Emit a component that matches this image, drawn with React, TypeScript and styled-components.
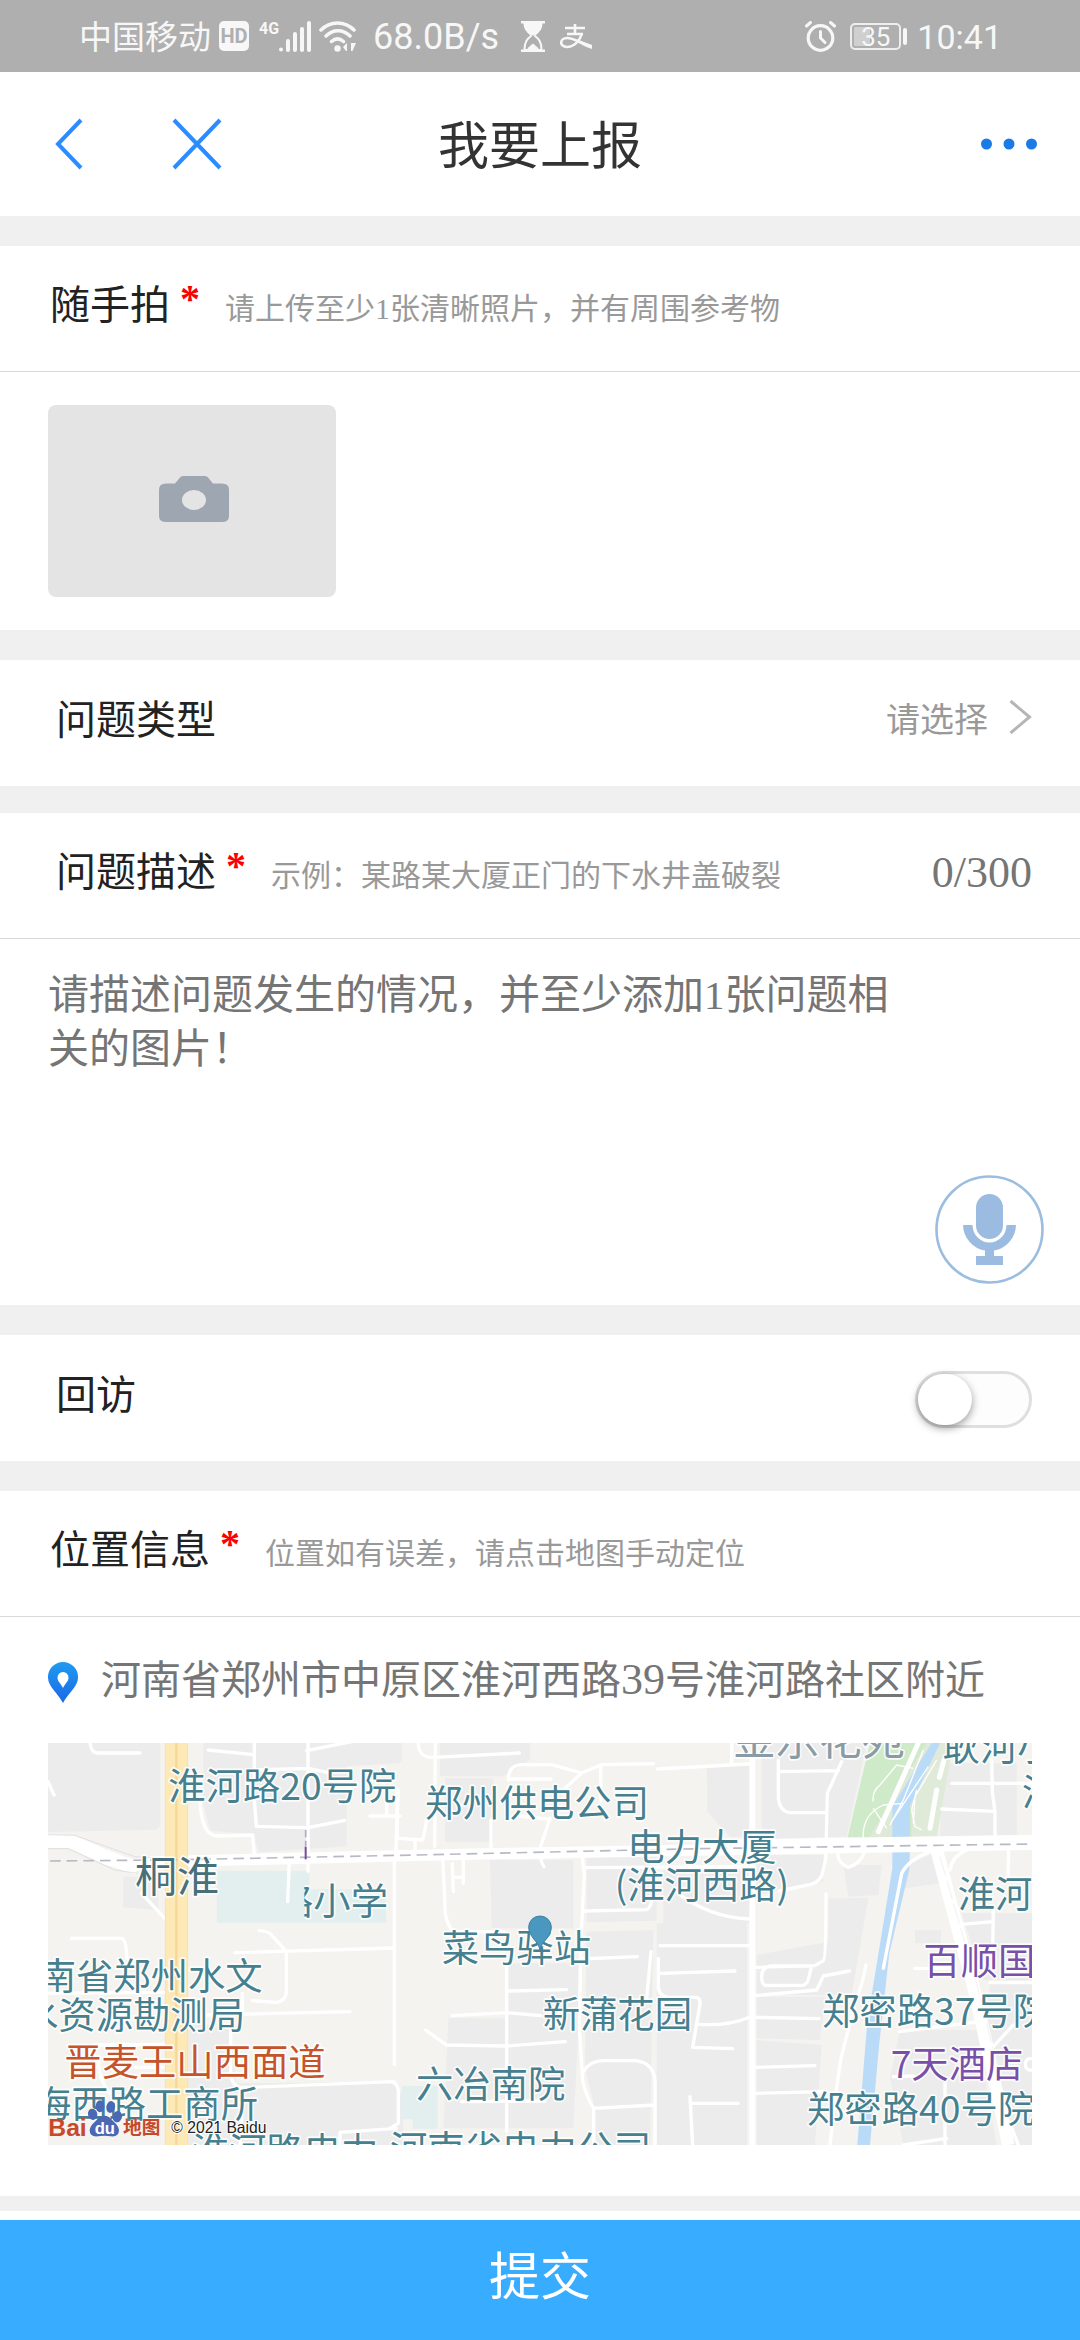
import React, { useState } from "react";
import styled, { createGlobalStyle } from "styled-components";

const cjk = `"Noto Sans CJK SC", sans-serif`;

const GlobalStyle = createGlobalStyle`
  *, *::before, *::after { box-sizing: border-box; }
  body {
    margin: 0;
    background: #f0f0f0;
    color: #222;
    font-family: "Liberation Serif", ${cjk};
  }
  button, textarea { font: inherit; color: inherit; border: 0; background: none; padding: 0; }
`;

const Page = styled.div`
  display: flex;
  flex-direction: column;
  min-height: 100vh;
`;

/* ---------- status bar ---------- */

const StatusBar = styled.header`
  display: flex;
  align-items: center;
  justify-content: space-between;
  height: 72px;
  padding: 0 78px 0 79px;
  background: #afafaf;
  color: #f7f7f7;
  font-family: Roboto, ${cjk};
  font-size: 36px;
  line-height: 40px;
`;

const StatusGroup = styled.div`
  display: flex;
  align-items: center;
  gap: 8px;
`;

const Carrier = styled.span`
  padding-top: 4px;
  font-size: 33px;
`;

const HdBadge = styled.span`
  width: 30px;
  height: 30px;
  border-radius: 5px;
  background: #f7f7f7;
  color: #afafaf;
  font: 700 20px/31px Roboto, sans-serif;
  text-align: center;
`;

const Network = styled.span`
  display: flex;
  align-items: flex-start;
  padding-left: 2px;
`;

const NetworkType = styled.span`
  font: 700 16px/16px Roboto, sans-serif;
`;

const Speed = styled.span`
  margin: 0 14px 0 8px;
  padding-top: 2px;
`;

const Notices = styled.span`
  display: flex;
  align-items: center;
  gap: 15px;
`;

const Battery = styled.span`
  display: flex;
  align-items: center;
  gap: 2px;
  margin: 0 2px 0 6px;

  &::after {
    content: "";
    width: 4px;
    height: 17px;
    border-radius: 2px;
    background: #f7f7f7;
  }
`;

const BatteryLevel = styled.span`
  width: 51px;
  height: 27px;
  border: 2px solid #eee;
  border-radius: 5px;
  background: linear-gradient(90deg, #cfcfcf 38%, transparent 38%) content-box;
  padding: 2px;
  font-size: 26px;
  line-height: 20px;
  text-align: center;
`;

const Clock = styled.time`
  padding-top: 2px;
  font-size: 34px;
`;

/* ---------- navigation ---------- */

const NavBar = styled.nav`
  display: grid;
  grid-template-columns: 1fr auto 1fr;
  align-items: center;
  height: 144px;
  padding: 0 42px;
  background: #fff;
`;

const NavActions = styled.div`
  display: flex;
  align-items: center;
  gap: 88px;
  padding-left: 12px;
`;

const IconButton = styled.button`
  display: flex;
  cursor: pointer;
`;

const MoreButton = styled(IconButton)`
  justify-self: end;
`;

const Title = styled.h1`
  margin: 0;
  padding-top: 6px;
  color: #333;
  font-size: 51px;
  font-weight: 400;
  line-height: 76px;
`;

/* ---------- form ---------- */

const Form = styled.form`
  display: flex;
  flex-direction: column;
  flex: 1;
  padding-top: 30px;
`;

const Section = styled.section<{ $gap?: number }>`
  background: #fff;
  margin-bottom: ${(p) => p.$gap ?? 30}px;
`;

const Row = styled.div<{ $inset?: boolean; $divided?: boolean }>`
  display: flex;
  align-items: center;
  height: 126px;
  padding: 0 48px 5px ${(p) => (p.$inset ? 56 : 50)}px;
  border-bottom: ${(p) => (p.$divided ? "1px solid #d9d9d9" : "0")};
`;

const Label = styled.label`
  font-size: 40px;
  line-height: 60px;
`;

const Required = styled.span`
  margin-left: 10px;
  padding-bottom: 14px;
  color: #f00;
  font-size: 40px;
  font-weight: 700;
  line-height: 60px;
`;

const Hint = styled.span`
  margin-left: 25px;
  padding-top: 6px;
  color: #999;
  font-size: 30px;
  line-height: 44px;
`;

const Counter = styled.output`
  margin-left: auto;
  color: #757575;
  font-size: 44px;
  line-height: 60px;
`;

const Picker = styled.button`
  display: flex;
  align-items: center;
  gap: 21px;
  margin-left: auto;
  color: #999;
  font-size: 34px;
  line-height: 48px;
  cursor: pointer;

  svg { margin-bottom: 8px; }
`;

const PhotoArea = styled.div`
  padding: 33px 48px;
`;

const PhotoButton = styled.button`
  display: flex;
  align-items: center;
  justify-content: center;
  width: 288px;
  height: 192px;
  padding: 0 0 4px 4px;
  border-radius: 8px;
  background: #e4e4e4;
  cursor: pointer;
`;

const DescriptionArea = styled.div`
  display: flex;
  align-items: flex-end;
  justify-content: space-between;
  padding: 29px 36px 21px 48px;
`;

const Description = styled.textarea`
  width: 850px;
  max-width: 86%;
  height: 316px;
  resize: none;
  outline: none;
  font-size: 41px;
  line-height: 54px;

  &::placeholder { color: #757575; opacity: 1; }
`;

const Switch = styled.input`
  appearance: none;
  display: flex;
  width: 117px;
  height: 57px;
  margin: 8px 0 0 auto;
  border: 3px solid #dfdfdf;
  border-radius: 29px;
  background: #fdfdfd;
  cursor: pointer;

  &::before {
    content: "";
    width: 54px;
    height: 51px;
    border-radius: 26px;
    background: #fff;
    box-shadow: 0 3px 9px rgba(0, 0, 0, 0.4);
  }

  &:checked { background: #38adff; justify-content: flex-end; }
`;

const Address = styled.address`
  display: flex;
  align-items: center;
  gap: 23px;
  height: 126px;
  padding: 0 48px;
  color: #757575;
  font-size: 40px;
  font-style: normal;
  line-height: 60px;

  svg { margin-top: 4px; }
`;

const AddressNumber = styled.span`
  font-size: 44px;
`;

const MapFrame = styled.div`
  padding: 0 48px 51px;

  svg { display: block; width: 100%; height: auto; }
`;

const SubmitBar = styled.footer`
  margin-top: auto;
  padding-top: 9px;
  background: #fff;
`;

const Submit = styled.button`
  display: block;
  width: 100%;
  height: 120px;
  padding-bottom: 4px;
  background: #38adff;
  color: #fff;
  font-size: 51px;
  line-height: 76px;
  cursor: pointer;
`;

/* ---------- icons ---------- */

const SignalIcon = () => (
  <svg width="32" height="31" viewBox="0 0 32 31" fill="#f7f7f7" aria-hidden="true">
    <circle cx="2" cy="28.500" r="2" />
    <rect x="7" y="18" width="4" height="13" rx="2" />
    <rect x="14" y="11" width="4" height="20" rx="2" />
    <rect x="21" y="6" width="4" height="25" rx="2" />
    <rect x="28" y="0" width="4" height="31" rx="2" />
  </svg>
);

const WifiIcon = () => (
  <svg width="38" height="31" viewBox="0 0 38 31" fill="none" stroke="#f7f7f7" strokeWidth="3.500" strokeLinecap="round" aria-hidden="true">
    <path d="M2 9C11-.5 26-.5 35 9M7 15c7-7 17-7 24 0M12.500 20.500c4-3.500 8-3.500 12 0" />
    <circle cx="18.500" cy="27.500" r="3.200" fill="#f7f7f7" stroke="none" />
    <path d="M28 22v8h-1l-3-4zM32 22h5l-3.500 8H32z" fill="#f7f7f7" stroke="none" />
  </svg>
);

const HourglassIcon = () => (
  <svg width="24" height="31" viewBox="0 0 24 31" aria-hidden="true">
    <path d="M0 0h24v2.500H0zM0 28.500h24V31H0z" fill="#f7f7f7" />
    <path d="M2.500 2h19c0 6-3 9-7 12.500h-5C5.500 11 2.500 8 2.500 2z" fill="#f7f7f7" />
    <path d="M10.500 14.500C6 18 3.500 21 3.500 29h17c0-8-2.500-11-7-14.500" fill="none" stroke="#f7f7f7" strokeWidth="2" />
    <path d="M6 28.500c1.500-3 4-4 6-6 2 2 4.500 3 6 6z" fill="#f7f7f7" />
  </svg>
);

const AlipayIcon = () => (
  <svg width="32" height="25" viewBox="0 0 32 25" fill="none" stroke="#f7f7f7" strokeWidth="2.600" aria-hidden="true">
    <path d="M15 0v10M5 4h20M7 10h16" />
    <path d="M22 9.500c-2 7-8 13.500-15 13.500-8 0-7.500-9 0-9 7 0 12 4.500 25 8.500" />
    <path d="M18 16l14 5v4c-6-2-11-4.500-15-7z" fill="#f7f7f7" stroke="none" />
  </svg>
);

const AlarmIcon = () => (
  <svg width="31" height="31" viewBox="0 0 31 31" fill="none" stroke="#f7f7f7" strokeLinecap="round" aria-hidden="true">
    <circle cx="15.500" cy="17" r="12.300" strokeWidth="3.200" />
    <path d="M1.500 5l4-3.500M29.500 5l-4-3.500" strokeWidth="3" />
    <path d="M15.500 10.500V17l4.500 4.500" strokeWidth="3" />
  </svg>
);

const BackIcon = () => (
  <svg width="30" height="52" viewBox="0 0 30 52" fill="none" stroke="#2b8cff" strokeWidth="4" aria-hidden="true">
    <path d="M27 2L4 26l23 24" />
  </svg>
);

const CloseIcon = () => (
  <svg width="50" height="52" viewBox="0 0 50 52" fill="none" stroke="#2b8cff" strokeWidth="4" aria-hidden="true">
    <path d="M2 2l46 48M48 2L2 50" />
  </svg>
);

const MoreIcon = () => (
  <svg width="58" height="12" viewBox="0 0 58 12" fill="#1a7be6" aria-hidden="true">
    <circle cx="6.500" cy="6" r="5.500" />
    <circle cx="29" cy="6" r="5.500" />
    <circle cx="51.500" cy="6" r="5.500" />
  </svg>
);

const CameraIcon = () => (
  <svg width="70" height="46" viewBox="0 0 70 46" aria-hidden="true">
    <path
      fill="#9ea7b1"
      fillRule="evenodd"
      d="M16 7.500L21 1.500Q22 0 24 0h22q2 0 3 1.500l5 6h9q7 0 7 6V40q0 6-7 6H7q-7 0-7-6V13.500q0-6 7-6zM35 14a12 10 0 1 0 0 20 12 10 0 1 0 0-20z"
    />
  </svg>
);

const ChevronIcon = () => (
  <svg width="23" height="34" viewBox="0 0 23 34" fill="none" stroke="#b5b5b5" strokeWidth="3" aria-hidden="true">
    <path d="M1.500 1l19 16-19 16" />
  </svg>
);

const MicIcon = () => (
  <svg width="109" height="109" viewBox="0 0 109 109" aria-hidden="true">
    <circle cx="54.500" cy="54.500" r="53" fill="#fff" stroke="#9bbde0" strokeWidth="2.600" />
    <g fill="#9bbce0">
      <rect x="41" y="19" width="27" height="45" rx="13.500" />
      <path d="M28 50h9.500a17 17.500 0 0 0 34 0H81A26.500 26.500 0 0 1 59 75.500V81h9v9H41v-9h9v-5.500A26.500 26.500 0 0 1 28 50z" />
    </g>
  </svg>
);

const PinIcon = () => (
  <svg width="30" height="41" viewBox="0 0 30 41" aria-hidden="true">
    <defs>
      <linearGradient id="pin" x1="0" y1="0" x2="0" y2="1">
        <stop offset="0" stopColor="#1f9bf0" />
        <stop offset="1" stopColor="#1a68e6" />
      </linearGradient>
    </defs>
    <path d="M15 0A15 15 0 0 0 0 15.500C0 25 10 31 15 41c5-10 15-16 15-25.500A15 15 0 0 0 15 0z" fill="url(#pin)" />
    <path d="M15 10a5.500 5.500 0 0 0-5.500 6c0 3 3 5 5.500 10 2.500-5 5.500-7 5.500-10a5.500 5.500 0 0 0-5.500-6z" fill="#fff" />
  </svg>
);

/* ---------- map ---------- */

const MapText = styled.text<{ $tone?: "poi" | "area" | "food" | "hotel" | "muted" }>`
  font-family: ${cjk};
  font-size: ${(p) => (p.$tone === "area" ? 126 : p.$tone === "muted" ? 129 : 112)}px;
  fill: ${(p) =>
    ({ poi: "#46808f", area: "#48707a", food: "#c6542a", hotel: "#7850a8", muted: "#8a9ba5" })[p.$tone ?? "poi"]};
  stroke: #fff;
  stroke-opacity: 0.85;
  stroke-width: 10px;
  stroke-linejoin: round;
  paint-order: stroke;
`;

const LogoText = styled.text<{ $size: number; $color: string }>`
  font-family: "Liberation Sans", ${cjk};
  font-size: ${(p) => p.$size}px;
  font-weight: 700;
  fill: ${(p) => p.$color};
`;

const Copyright = styled.text`
  font-family: "Liberation Sans", sans-serif;
  font-size: 47px;
  fill: #222;
  stroke: #fff;
  stroke-width: 6px;
  paint-order: stroke;
`;

const LocationMap = () => (
  <svg viewBox="24 39 2952 1206" role="img" aria-label="地图">
    <defs>
      <clipPath id="school"><rect x="793" y="400" width="400" height="220" /></clipPath>
    </defs>
    <rect x="24" y="39" width="2952" height="1206" fill="#f4f3ef" />

    {/* city blocks */}
    <g fill="#ececec">
      <path d="M24 39h337v240q0 20-20 20L24 306z" />
      <path d="M490 39h590v60l-160 10v240l-265 18-15-55-130-10-20-80z" />
      <path d="M250 440h105v100l-105-8zM445 870l125 30 20 160 460-5 40 40v150H445z" />
      <g transform="translate(1050 0)">
        <path d="M0 39h35v55H0zM150 39h270v50l-80 50H150zM165 145h145v190H165zM955 105h120v210h-60l-62-75z" />
        <path d="M300 390h250v205H305zM590 372h210v200l-210 5zM820 420h260v160H820zM590 605l200-5-10 645H620l-10-130-25-100z" />
        <path d="M355 700h210v200l-15 295H160l15-330h180zM800 580h270v665H800zM0 1060h20v130H0z" />
      </g>
      <g transform="translate(1950 0)">
        <path d="M50 110h130v210h-60l-68-75zM215 39h315l-60 280-255 10zM760 100h220v220H750z" />
        <path d="M200 375h200v80l-200 40zM460 405h115l-10 90-90 5zM415 505h120l-50 290H200v-120l215-40zM200 800h205l-15 130-190-5zM200 930l195 15-20 300H200z" />
        <path d="M640 410l90-40 20 90-105 15zM675 600h78v40h-78zM815 550h211v200H880zM630 900h230l60 345H640l-40-200zM900 760h126v485h-80l-60-320z" />
        <path d="M0 420h170v825H0z" />
      </g>
    </g>

    {/* schools and parks */}
    <path d="M530 422h278v56h230v100H530zM1085 1068h108v128h-75v-28h-33z" fill="#e2efee" />
    <path d="M2490 39h235l-95 288-207-5z" fill="#cfeac9" />
    <path d="M2660 39h75l-180 285h-70z" fill="#dfe9d8" />
    <path d="M2700 39h40l-50 285h-75V200z" fill="#e0ead9" />

    {/* river */}
    <path d="M2675 39h25l-90 190v120l-2 70-60 250-30 270-28 306h-38l30-370 75-460V230z" fill="#badbf8" />

    {/* local streets */}
    <g fill="none" stroke="#fff" strokeWidth="10" strokeLinecap="round" strokeLinejoin="round">
      <path d="M150 39q5 30 20 30h130M24 155l18 40M505 60l135 14M643 39v170l6 80 155 4 110-22M640 120l165-5 70 15M800 62l140-28M804 39v385M480 215q5 100 50 103l108-3 5 60M748 390l-5 125M990 258h90M1040 200v55M1075 180l-8 195M1063 385v618" />
      <path d="M305 490l72 78M95 625h150q15 5 15 60M585 668l478-14M657 602q30 0 42 18l40 45v125q-5 25-30 27l-72-5M500 855l430-10M24 790l350-3M165 945l212-2M285 1012h92M175 990q0 60 35 100M572 900v125q0 40 30 48l460-18M600 1075q10 60 0 170M900 1245v-38l170-12M607 790v60" />
      <g transform="translate(1050 0)">
        <path d="M85 39q0 45 45 43l258-13M136 39l-2 310M355 150q0-45 40-46h90l90 25 60-25 155-3M525 175l50-46M632 104v110M355 147h128M20 185l2 140 75 5q8-20 12-60M303 270v90M75 330v30M480 265l-30 90q0 40 12 55M480 268l-90-10M803 117l272-15M1025 39v60M158 380l8 170q10 55 35 55h140M187 400l3 85M220 385v75M190 442h30" />
        <path d="M575 370l8 60-10 200-5 260 10 160q10 50 33 85v110M585 413l490-3M585 543l185-4q12-5 15-30M570 687l172-7M350 700v505M350 783l180-4M187 857l165-9 100 9M107 900l62 45 180 3 177-13M580 1025q20-33 60-33h95q55 5 60 60v193M610 1135l185-10M215 1115l250-2" />
        <path d="M783 665l-13 140M805 685v90q5 25 30 27h85q12 5 10 20l-22 130 120 4M810 730l225-7M925 883q90 5 150-20M810 647h265M900 1100l8 145M905 1120h140M865 490q90 70 210 77M0 1055q20 0 25 25v100l-25 15" />
      </g>
      <g transform="translate(1950 0)">
        <path d="M125 39v60M265 90v115q5 40 35 43h108M265 125l180-3M455 95l-43 95-5 200-10 40q-5 25-35 33l-95 20M443 370q0 30 32 42 35-10 48-45M785 160h241M755 237l158 7M905 90l2 95 8 60v70M956 360l-2 90M780 420q5-40 50-60M635 430q20-40 85-65" />
        <path d="M195 712l180-5 25-15q8-5 8-200M215 740q0-30 30-32h120l-10 40q-5 18-20 18H225q-10-5-10-26M195 797l185-17 20-42 78-15M195 862l192 4M195 1012l180-5M195 1090l210-5M528 705q-10 60-35 120l-40 160-18 120-15 140M635 430l-55 285" />
        <path d="M815 583l95-8M910 540l-2 130M675 715h120M900 758h126M628 905l240-30M910 950l60-65M610 1040l60-2M765 1060v185M640 1245l130-20M960 1180l25 65M1026 985q-20 0-20 18t20 18" />
      </g>
      <path d="M2137 90v1155" strokeWidth="18" />
      <path d="M2635 39l-120 266M2712 90l-14 52M2690 180l-20 115" strokeWidth="15" />
    </g>

    {/* main roads */}
    <g fill="none" stroke="#fff" strokeLinejoin="round">
      <path d="M24 330l75 3 95 42 85 32 60-12 350-8 570-14 800-14 917-16" strokeWidth="34" />
      <path d="M2000 352l976-16" strokeWidth="44" />
      <path d="M2690 360l40 150 70 260 60 260 45 215" strokeWidth="38" />
      <path d="M24 345l65 0 110 50 90 30" strokeWidth="18" />
    </g>
    <g fill="none" stroke="#d4d5da" strokeWidth="2">
      <path d="M24 314l80 2 180 64 100 6M24 356h60l140 64 70 10" />
      <path d="M2700 380l110 380 80 320" strokeDasharray="60 14" stroke="#e8e8e8" />
    </g>
    <path d="M376 39h67v1206h-67z" fill="#fde9b6" />
    <path d="M409 39v1206" stroke="#f5d79c" strokeWidth="7" />
    <path d="M376 39v1206M443 39v1206" stroke="#f7e1ac" strokeWidth="3" />
    <path d="M30 393l350-3 700-14 900-20 996-14" fill="none" stroke="#b9b9c6" strokeWidth="5" strokeDasharray="32 18" />
    <path d="M797 300v48" stroke="#b7a6c9" strokeWidth="5" strokeDasharray="22 10" />
    <path d="M797 350v38" stroke="#7a49a5" strokeWidth="6" />
    <path
      d="M2470 325q-5-70 60-100l60-5M2500 215q-5-30 20-50l50-60 50 10M2500 235l40 60M2650 60l-60 150-40 75M2665 110l-110 165M2630 180l-15 60 10 50 20 10M2690 90l-65 110-5 80"
      fill="none"
      stroke="#fff"
      strokeWidth="4"
    />

    <MapText x="385" y="211">淮河路20号院</MapText>
    <MapText x="285" y="485" $tone="area">桐淮</MapText>
    <g clipPath="url(#school)"><MapText x="708" y="555">路小学</MapText></g>
    <MapText x="-4" y="780">南省郑州水文</MapText>
    <MapText x="-57" y="897">水资源勘测局</MapText>
    <MapText x="73" y="1038" $tone="food">晋麦王山西面道</MapText>
    <MapText x="-18" y="1165">海西路工商所</MapText>
    <MapText x="455" y="1306">淮河路电力</MapText>
    <MapText x="1050" y="1300">河南省电力公司</MapText>
    <MapText x="1155" y="262">郑州供电公司</MapText>
    <MapText x="1762" y="394">电力大厦</MapText>
    <MapText x="1724" y="508">(淮河西路)</MapText>
    <MapText x="1205" y="697">菜鸟驿站</MapText>
    <MapText x="1508" y="893">新蒲花园</MapText>
    <MapText x="1128" y="1105">六冶南院</MapText>
    <MapText x="2078" y="75" $tone="muted">金乐花苑</MapText>
    <MapText x="2708" y="93">耿河小</MapText>
    <MapText x="2946" y="227">淮</MapText>
    <MapText x="2753" y="533">淮河</MapText>
    <MapText x="2650" y="735" $tone="hotel">百顺国</MapText>
    <MapText x="2346" y="885">郑密路37号院</MapText>
    <MapText x="2552" y="1043" $tone="hotel">7天酒店</MapText>
    <MapText x="2301" y="1180">郑密路40号院</MapText>

    {/* current position */}
    <path d="M1500 660c-4-25-34-40-34-68a34 34 0 0 1 68 0c0 28-30 43-34 68z" fill="#4a97c0" stroke="#3f7f9f" strokeWidth="3" />

    {/* map provider */}
    <LogoText x="25" y="1217" $size={74} $color="#c8482a">Bai</LogoText>
    <g fill="#4a68b4">
      <ellipse cx="180" cy="1129" rx="13" ry="18" />
      <ellipse cx="212" cy="1131" rx="13" ry="18" transform="rotate(12 212 1131)" />
      <ellipse cx="158" cy="1153" rx="14" ry="17" transform="rotate(-15 158 1153)" />
      <ellipse cx="232" cy="1160" rx="14" ry="17" transform="rotate(15 232 1160)" />
      <path d="M193 1157q14 0 26 16 18 16 18 28 0 20-24 18-20-4-40 0-24 2-24-18 0-12 18-28 12-16 26-16z" />
    </g>
    <LogoText x="164" y="1211" $size={50} $color="#fff">du</LogoText>
    <LogoText x="249" y="1211" $size={56} $color="#c8482a">地图</LogoText>
    <Copyright x="394" y="1209">© 2021 Baidu</Copyright>
  </svg>
);

export default function App() {
  const [text, setText] = useState("");
  const [callback, setCallback] = useState(false);

  return (
    <Page>
      <GlobalStyle />
      <StatusBar>
        <StatusGroup>
          <Carrier>中国移动</Carrier>
          <HdBadge>HD</HdBadge>
          <Network>
            <NetworkType>4G</NetworkType>
            <SignalIcon />
          </Network>
          <WifiIcon />
          <Speed>68.0B/s</Speed>
          <Notices>
            <HourglassIcon />
            <AlipayIcon />
          </Notices>
        </StatusGroup>
        <StatusGroup>
          <AlarmIcon />
          <Battery>
            <BatteryLevel>35</BatteryLevel>
          </Battery>
          <Clock>10:41</Clock>
        </StatusGroup>
      </StatusBar>

      <NavBar>
        <NavActions>
          <IconButton type="button" aria-label="返回"><BackIcon /></IconButton>
          <IconButton type="button" aria-label="关闭"><CloseIcon /></IconButton>
        </NavActions>
        <Title>我要上报</Title>
        <MoreButton type="button" aria-label="更多"><MoreIcon /></MoreButton>
      </NavBar>

      <Form onSubmit={(e) => e.preventDefault()}>
        <Section>
          <Row $divided>
            <Label htmlFor="photo">随手拍</Label>
            <Required>*</Required>
            <Hint>请上传至少1张清晰照片，并有周围参考物</Hint>
          </Row>
          <PhotoArea>
            <PhotoButton id="photo" type="button" aria-label="拍照"><CameraIcon /></PhotoButton>
          </PhotoArea>
        </Section>

        <Section $gap={27}>
          <Row $inset>
            <Label htmlFor="kind">问题类型</Label>
            <Picker id="kind" type="button">
              请选择
              <ChevronIcon />
            </Picker>
          </Row>
        </Section>

        <Section>
          <Row $inset $divided>
            <Label htmlFor="description">问题描述</Label>
            <Required>*</Required>
            <Hint>示例：某路某大厦正门的下水井盖破裂</Hint>
            <Counter htmlFor="description">{text.length}/300</Counter>
          </Row>
          <DescriptionArea>
            <Description
              id="description"
              maxLength={300}
              value={text}
              onChange={(e) => setText(e.target.value)}
              placeholder="请描述问题发生的情况，并至少添加1张问题相关的图片！"
            />
            <IconButton type="button" aria-label="语音输入"><MicIcon /></IconButton>
          </DescriptionArea>
        </Section>

        <Section>
          <Row $inset>
            <Label htmlFor="callback">回访</Label>
            <Switch
              id="callback"
              type="checkbox"
              role="switch"
              checked={callback}
              onChange={(e) => setCallback(e.target.checked)}
            />
          </Row>
        </Section>

        <Section $gap={15}>
          <Row $divided>
            <Label as="span">位置信息</Label>
            <Required>*</Required>
            <Hint>位置如有误差，请点击地图手动定位</Hint>
          </Row>
          <Address>
            <PinIcon />
            <span>河南省郑州市中原区淮河西路<AddressNumber>39</AddressNumber>号淮河路社区附近</span>
          </Address>
          <MapFrame><LocationMap /></MapFrame>
        </Section>

        <SubmitBar>
          <Submit type="submit">提交</Submit>
        </SubmitBar>
      </Form>
    </Page>
  );
}
